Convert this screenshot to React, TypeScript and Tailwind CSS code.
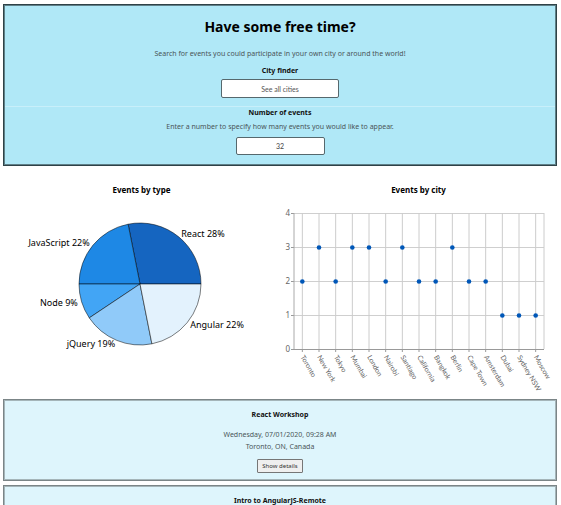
import React from "react";

const slices = [
  { name: "React", count: 9, color: "#1565c0" },
  { name: "JavaScript", count: 7, color: "#1e88e5" },
  { name: "Node", count: 3, color: "#42a5f5" },
  { name: "jQuery", count: 6, color: "#90caf9" },
  { name: "Angular", count: 7, color: "#e3f2fd" },
];

const cities: [string, number][] = [
  ["Toronto", 2],
  ["New York", 3],
  ["Tokyo", 2],
  ["Mumbai", 3],
  ["London", 3],
  ["Nairobi", 2],
  ["Santiago", 3],
  ["California", 2],
  ["Bangkok", 2],
  ["Berlin", 3],
  ["Cape Town", 2],
  ["Amsterdam", 2],
  ["Dubai", 1],
  ["Sydney NSW", 1],
  ["Moscow", 1],
];

function PieChart() {
  const cx = 137;
  const cy = 86;
  const r = 61;
  const total = slices.reduce((sum, s) => sum + s.count, 0);
  let start = 0;
  return (
    <svg viewBox="0 0 277 201" className="block w-full" role="img" aria-label="Events by type">
      {slices.map((s) => {
        const a0 = (start / total) * Math.PI * 2;
        start += s.count;
        const a1 = (start / total) * Math.PI * 2;
        const mid = (a0 + a1) / 2;
        const lx = cx + (r + 4) * Math.cos(mid);
        const ly = cy - (r + 4) * Math.sin(mid);
        return (
          <g key={s.name}>
            <path
              d={`M${cx} ${cy}L${cx + r * Math.cos(a0)} ${cy - r * Math.sin(a0)}A${r} ${r} 0 0 0 ${cx + r * Math.cos(a1)} ${cy - r * Math.sin(a1)}Z`}
              fill={s.color}
              stroke="#000000"
              strokeOpacity="0.5"
            />
            <text
              x={lx}
              y={ly}
              dy="3"
              textAnchor={lx > cx ? "start" : "end"}
              className="fill-black text-[9px]"
            >
              {s.name} {Math.round((s.count / total) * 100)}%
            </text>
          </g>
        );
      })}
    </svg>
  );
}

function ScatterChart() {
  const left = 14;
  const right = 264;
  const top = 15;
  const step = 34;
  const bottom = top + step * 4;
  const band = (right - left) / cities.length;
  return (
    <svg viewBox="0 0 277 201" className="block w-full" role="img" aria-label="Events by city">
      {[0, 1, 2, 3, 4].map((n) => (
        <g key={n}>
          <line x1={left} x2={right} y1={bottom - n * step + 0.5} y2={bottom - n * step + 0.5} stroke="#cfcfcf" />
          <line x1={left - 3} x2={left} y1={bottom - n * step + 0.5} y2={bottom - n * step + 0.5} stroke="#999999" />
          <text x={left - 4} y={bottom - n * step} dy="3" textAnchor="end" className="fill-[#666666] text-[8px]">
            {n}
          </text>
        </g>
      ))}
      {cities.map(([name], i) => {
        const x = left + band * (i + 0.5);
        return (
          <g key={name}>
            <line x1={x} x2={x} y1={top} y2={bottom} stroke="#cccccc" />
            <line x1={x} x2={x} y1={bottom} y2={bottom + 3} stroke="#999999" />
            <text
              transform={`translate(${x - 2} ${bottom + 8}) rotate(60)`}
              className="fill-[#666666] font-['Lato','Noto_Sans',sans-serif] text-[7px]"
            >
              {name}
            </text>
          </g>
        );
      })}
      <line x1={right} x2={right} y1={top} y2={bottom} stroke="#cccccc" />
      <line x1={left} x2={left} y1={top} y2={bottom} stroke="#aaaaaa" />
      <line x1={left} x2={right} y1={bottom + 0.5} y2={bottom + 0.5} stroke="#999999" />
      {cities.map(([name, n], i) => (
        <circle key={name} cx={left + band * (i + 0.5)} cy={bottom - n * step + 0.5} r="2.3" fill="#0057b8" />
      ))}
    </svg>
  );
}

function EventCard({ title, date, place }: { title: string; date?: string; place?: string }) {
  return (
    <article className="flex min-h-[82px] flex-col items-center border border-[#7b8587] bg-[#def5fc] pt-[9px] pb-[7px] shadow-[inset_0_0_0_1px_#a5b5b9]">
      <h3 className="text-[7px] leading-[12px] font-bold text-[#111111]">{title}</h3>
      {date && place && (
        <>
          <p className="mt-2 text-[7px] leading-[12px]">{date}</p>
          <p className="text-[7px] leading-[12px]">{place}</p>
          <button
            type="button"
            className="mt-[6px] h-[14px] rounded-[1px] border border-[#767676] bg-[#efefef] px-1 text-[6px] leading-[12px] text-[#333333]"
          >
            Show details
          </button>
        </>
      )}
    </article>
  );
}

export default function App() {
  return (
    <div className="h-screen overflow-hidden bg-white pt-1 pr-1 pl-[3px] font-['Noto_Sans','Segoe_UI',sans-serif] text-[#4a5558]">
      <header className="border border-[#2f4247] bg-[#b0e8f7] p-px text-center shadow-[inset_0_0_0_1px_#5f8088]">
        <section className="flex flex-col items-center pb-2">
          <h1 className="mt-2 text-[14px] leading-[26px] font-bold text-black">Have some free time?</h1>
          <p className="mt-2 text-[7px] leading-[12px]">
            Search for events you could participate in your own city or around the world!
          </p>
          <label htmlFor="city" className="mt-1 text-[7px] leading-[14px] font-bold text-[#101010]">
            City finder
          </label>
          <input
            id="city"
            type="text"
            placeholder="See all cities"
            className="mt-px h-[19px] w-[118px] rounded-[2px] border border-[#56686d] bg-white text-center font-['Lato','Noto_Sans',sans-serif] text-[7px] placeholder:text-[#555555]"
          />
        </section>
        <section className="flex flex-col items-center border-t border-[#c8effa] pb-[9px]">
          <label htmlFor="count" className="text-[7px] leading-[12px] font-bold text-[#101010]">
            Number of events
          </label>
          <p className="mt-[2px] text-[7px] leading-[12px]">
            Enter a number to specify how many events you would like to appear.
          </p>
          <input
            id="count"
            type="text"
            inputMode="numeric"
            defaultValue="32"
            className="mt-1 h-[18px] w-[89px] rounded-[2px] border border-[#56686d] bg-white text-center font-['Lato','Noto_Sans',sans-serif] text-[7px] text-[#444444]"
          />
        </section>
      </header>
      <main>
        <div className="grid grid-cols-2 pt-4">
          <section>
            <h2 className="text-center text-[8px] leading-[16px] font-bold text-black">Events by type</h2>
            <PieChart />
          </section>
          <section>
            <h2 className="text-center text-[8px] leading-[16px] font-bold text-black">Events by city</h2>
            <ScatterChart />
          </section>
        </div>
        <div className="flex flex-col gap-1">
          <EventCard title="React Workshop" date="Wednesday, 07/01/2020, 09:28 AM" place="Toronto, ON, Canada" />
          <EventCard title="Intro to AngularJS-Remote" />
        </div>
      </main>
    </div>
  );
}
